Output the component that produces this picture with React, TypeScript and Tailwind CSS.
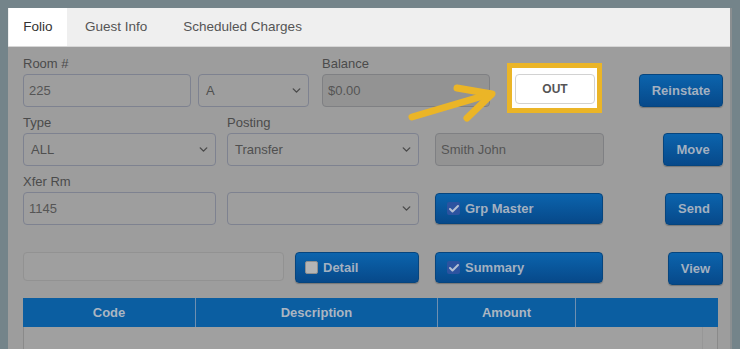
import { ChevronDown, Check } from 'lucide-react';

const font = "font-['Liberation_Sans','Helvetica',Arial,sans-serif]";

function Label({ text }: { text: string }) {
  return <div className="h-[19px] text-[13px] leading-[18px] text-[#4b4b4b]">{text}</div>;
}

function Field({ value, w, disabled }: { value: string; w: string; disabled?: boolean }) {
  return (
    <div
      className={`${w} h-[33px] rounded-[4px] border flex items-center px-[5px] text-[13px] text-[#555] ${
        disabled ? 'bg-[#939393] border-[#7f8083]' : 'bg-[#9e9e9e] border-[#7e8290]'
      }`}
    >
      {value}
    </div>
  );
}

function Select({ value, w }: { value: string; w: string }) {
  return (
    <div className={`${w} h-[33px] rounded-[4px] border border-[#7e8290] bg-[#9e9e9e] flex items-center justify-between pl-[7px] pr-[5px] text-[13px] text-[#4f4f4f]`}>
      <span>{value}</span>
      <ChevronDown size={13} strokeWidth={2.6} className="text-[#4a4a4a]" />
    </div>
  );
}

function BlueButton({ children, className }: { children: React.ReactNode; className: string }) {
  return (
    <div
      className={`${className} rounded-[4px] border border-[#06457e] bg-gradient-to-b from-[#0c64ad] to-[#07498a] shadow-[0_1px_1px_rgba(0,0,0,0.25)] flex items-center text-[13px] font-bold text-[#a3b0c0]`}
    >
      {children}
    </div>
  );
}

function Check13({ checked }: { checked: boolean }) {
  return checked ? (
    <div className="w-[13px] h-[13px] rounded-[2px] bg-[#2c53a0] flex items-center justify-center mr-[5px]">
      <Check size={12} strokeWidth={4} className="text-[#b4c0d3]" />
    </div>
  ) : (
    <div className="w-[13px] h-[13px] rounded-[2px] bg-[#b5b5b5] border border-[#8e8e8e] mr-[5px]" />
  );
}

export default function App() {
  return (
    <div className={`w-[740px] h-[349px] overflow-hidden bg-[#74848a] pt-[8px] pl-[8px] pr-[8px] ${font}`}>
      <div className="relative h-full bg-[#9d9d9d] border-r-[2px] border-[#8b8f91]">
        {/* tabs */}
        <div className="h-[39px] bg-[#efefef] border-b border-[#d6d6d6] flex items-end pl-[1px]">
          <div className="w-[58px] h-[38px] bg-white flex items-center justify-center text-[13.5px] text-[#333]">Folio</div>
          <div className="h-[38px] px-[18px] flex items-center text-[13.5px] text-[#555]">Guest Info</div>
          <div className="h-[38px] px-[18px] flex items-center text-[13.5px] text-[#555]">Scheduled Charges</div>
        </div>

        <div className="pt-[8px] pl-[15px] pr-[7px]">
          {/* row 1 */}
          <div className="flex items-start">
            <div>
              <Label text="Room #" />
              <Field value="225" w="w-[168px]" />
            </div>
            <div className="ml-[7px] pt-[19px]">
              <Select value="A" w="w-[111px]" />
            </div>
            <div className="ml-[13px]">
              <Label text="Balance" />
              <Field value="$0.00" w="w-[168px]" disabled />
            </div>
            <div className="ml-[17px] mt-[8px] -mb-[8px] w-[95px] h-[50px] border-[5px] border-[#ebb527] bg-white pl-[3px] pt-[6px]">
              <div className="w-[80px] h-[30px] rounded-[4px] border border-[#d2d2d2] flex items-center justify-center text-[12px] font-bold text-[#555]">
                OUT
              </div>
            </div>
            <BlueButton className="ml-auto mt-[19px] w-[84px] h-[33px] justify-center">Reinstate</BlueButton>
          </div>

          {/* row 2 */}
          <div className="flex items-start mt-[7px]">
            <div>
              <Label text="Type" />
              <Select value="ALL" w="w-[193px]" />
            </div>
            <div className="ml-[11px]">
              <Label text="Posting" />
              <Select value="Transfer" w="w-[192px]" />
            </div>
            <div className="ml-[16px] pt-[19px]">
              <Field value="Smith John" w="w-[169px]" disabled />
            </div>
            <BlueButton className="ml-auto mt-[19px] w-[60px] h-[33px] justify-center">Move</BlueButton>
          </div>

          {/* row 3 */}
          <div className="flex items-start mt-[7px]">
            <div>
              <Label text="Xfer Rm" />
              <Field value="1145" w="w-[193px]" />
            </div>
            <div className="ml-[11px] pt-[19px]">
              <Select value="" w="w-[192px]" />
            </div>
            <BlueButton className="ml-[16px] mt-[20px] w-[168px] h-[31px] pl-[11px]">
              <Check13 checked />
              Grp Master
            </BlueButton>
            <BlueButton className="ml-auto mt-[20px] w-[58px] h-[32px] justify-center">Send</BlueButton>
          </div>

          {/* row 4 */}
          <div className="flex items-start mt-[27px]">
            <div className="w-[261px] h-[29px] rounded-[4px] border border-[#929292] bg-[#9f9f9f]" />
            <BlueButton className="ml-[11px] w-[124px] h-[31px] pl-[9px]">
              <Check13 checked={false} />
              Detail
            </BlueButton>
            <BlueButton className="ml-[16px] w-[168px] h-[31px] pl-[11px]">
              <Check13 checked />
              Summary
            </BlueButton>
            <BlueButton className="ml-auto w-[55px] h-[33px] justify-center">View</BlueButton>
          </div>

          {/* table */}
          <div className="mt-[13px] w-[695px]">
            <div className="flex h-[29px] bg-[#0b5ea1] text-[13px] font-bold text-[#abb6c2]">
              <div className="w-[173px] flex items-center justify-center border-r border-[#6f8fb0]">Code</div>
              <div className="w-[242px] flex items-center justify-center border-r border-[#6f8fb0]">Description</div>
              <div className="w-[138px] flex items-center justify-center border-r border-[#6f8fb0]">Amount</div>
              <div className="flex-1" />
            </div>
            <div className="h-[30px] flex border-l border-r border-[#8a8a8a] bg-[#a0a0a0]">
              <div className="flex-1" />
              <div className="w-[15px] border-l border-[#979797]" />
            </div>
          </div>
        </div>

        {/* arrow */}
        <svg
          className="absolute left-[395px] top-[72px]"
          width="110"
          height="60"
          viewBox="395 80 110 60"
        >
          <g stroke="#ebb527" strokeWidth="7" strokeLinecap="round" strokeLinejoin="round" fill="none">
            <line x1="404" y1="117" x2="482" y2="94" />
            <polyline points="449,88 484,94 459,118" />
          </g>
        </svg>
      </div>
    </div>
  );
}
